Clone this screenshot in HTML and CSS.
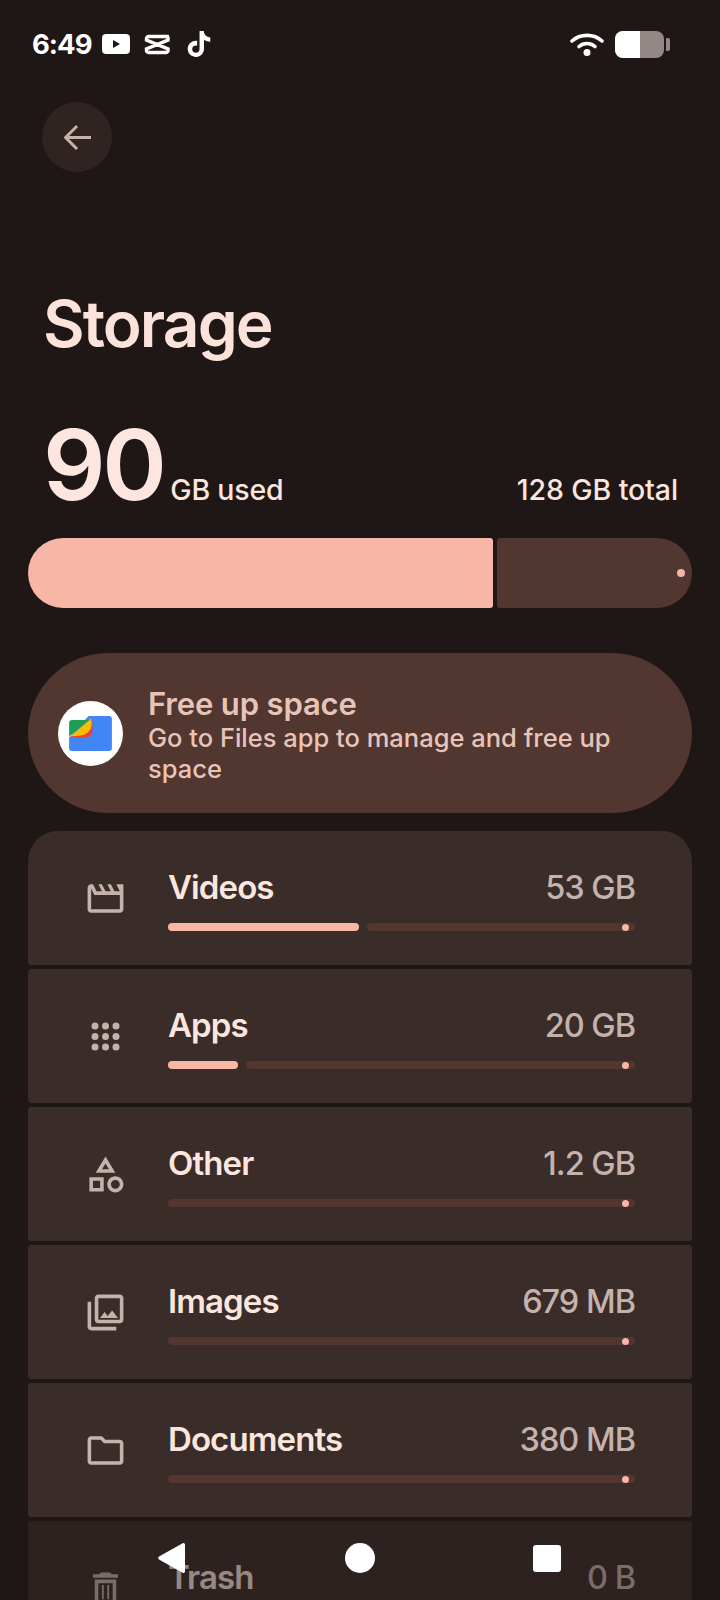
FILE: index.html
```html
<!DOCTYPE html>
<html lang="en">
<head>
<meta charset="utf-8">
<title>Storage</title>
<link rel="stylesheet" href="styles.css">
</head>
<body>
<div class="screen">
  <div class="status">
    <span class="clock">6:49</span>
    <svg class="st-yt" viewBox="0 0 28 20"><path fill="#fff" fill-rule="evenodd" d="M4 0h20a4 4 0 0 1 4 4v12a4 4 0 0 1-4 4H4a4 4 0 0 1-4-4V4a4 4 0 0 1 4-4zM11 6v8l7-4z"/></svg>
    <svg class="st-cc" viewBox="0 0 26 21"><path fill="none" stroke="#fff" stroke-width="3.4" d="M25 2.5H4.5a2 2 0 0 0-2 2v1.5L24 15v1a2 2 0 0 1-2 2.5H4.500a2 2 0 0 1-2-2V15L24 6V2.500"/></svg>
    <svg class="st-tt" viewBox="0 0 24 24"><path fill="#fff" d="M12.525.02c1.31-.02 2.61-.01 3.91-.02.08 1.53.63 3.09 1.75 4.17 1.12 1.11 2.7 1.62 4.24 1.79v4.03c-1.44-.05-2.89-.35-4.2-.97-.57-.26-1.1-.59-1.62-.93-.01 2.92.01 5.84-.02 8.75-.08 1.4-.54 2.79-1.35 3.94-1.31 1.92-3.58 3.17-5.91 3.21-1.43.08-2.86-.31-4.08-1.03-2.02-1.19-3.44-3.37-3.65-5.71-.02-.5-.03-1-.01-1.49.18-1.9 1.12-3.72 2.58-4.96 1.66-1.44 3.98-2.13 6.15-1.72.02 1.48-.04 2.96-.04 4.44-.99-.32-2.15-.23-3.02.37-.63.41-1.11 1.04-1.36 1.75-.21.51-.15 1.07-.14 1.61.24 1.64 1.82 3.02 3.5 2.87 1.12-.01 2.19-.66 2.77-1.61.19-.33.4-.67.41-1.06.1-1.79.06-3.57.07-5.36.01-4.03-.01-8.05.02-12.07z"/></svg>
    <span class="st-space"></span>
    <svg class="st-wifi" viewBox="0 0 34 24"><g fill="none" stroke="#fff" stroke-width="3.6" stroke-linecap="round"><path d="M2 9C10 1.500 24 1.500 32 9"/><path d="M9 14.500C13.500 10.500 20.500 10.500 25 14.500"/></g><circle cx="17" cy="20.500" r="3.500" fill="#fff"/></svg>
    <div class="battery"><div class="battery-fill"></div></div>
    <div class="battery-nub"></div>
  </div>

  <div class="back">
    <svg viewBox="0 0 27 27"><path fill="none" stroke="#c9b0aa" stroke-width="3" stroke-linecap="square" d="M12 3L1.500 13.500 12 24M3 13.500H26"/></svg>
  </div>

  <h1 class="title">Storage</h1>

  <div class="usage">
    <span class="usage-num">90</span>
    <span class="usage-unit">GB used</span>
    <span class="usage-total">128 GB total</span>
  </div>

  <div class="meter">
    <div class="meter-used"></div>
    <div class="meter-free"><span class="meter-dot"></span></div>
  </div>

  <div class="banner">
    <div class="files-logo">
      <svg viewBox="0 0 44 36">
        <path fill="#4285f4" d="M20 0h21a3 3 0 0 1 3 3v30a3 3 0 0 1-3 3H3a3 3 0 0 1-3-3V22z"/>
        <path fill="#ea4335" d="M3 21l16-7 5-9v11q-1 6-6 6H0z"/>
        <path fill="#1e9e55" d="M3 4h18L0 21V7a3 3 0 0 1 3-3z"/>
        <path fill="#fbbc04" d="M22 2q3 8-1 13t-9 5L1 21 21 4z"/>
      </svg>
    </div>
    <div class="banner-text">
      <div class="banner-title">Free up space</div>
      <div class="banner-sub">Go to Files app to manage and free up space</div>
    </div>
  </div>

  <div class="list">
    <div class="row">
      <svg class="row-icon" viewBox="0 0 24 24"><path d="M4 6.470L5.760 10H20v8H4V6.470M22 4h-4l2 4h-3l-2-4h-2l2 4h-3l-2-4H8l2 4H7L5 4H4c-1.100 0-1.990.9-1.990 2L2 18c0 1.100.9 2 2 2h16c1.100 0 2-.9 2-2V4z"/></svg>
      <div class="row-main">
        <div class="row-head"><span class="row-name">Videos</span><span class="row-size">53 GB</span></div>
        <div class="row-bar">
          <span class="row-used row-used-videos"></span>
          <span class="row-track"><span class="row-dot"></span></span>
        </div>
      </div>
    </div>
    <div class="row">
      <svg class="row-icon" viewBox="0 0 43 43"><circle cx="11" cy="11" r="3.500"/><circle cx="21.500" cy="11" r="3.500"/><circle cx="32" cy="11" r="3.500"/><circle cx="11" cy="21.500" r="3.500"/><circle cx="21.500" cy="21.500" r="3.500"/><circle cx="32" cy="21.500" r="3.500"/><circle cx="11" cy="32" r="3.500"/><circle cx="21.500" cy="32" r="3.500"/><circle cx="32" cy="32" r="3.500"/></svg>
      <div class="row-main">
        <div class="row-head"><span class="row-name">Apps</span><span class="row-size">20 GB</span></div>
        <div class="row-bar">
          <span class="row-used row-used-apps"></span>
          <span class="row-track"><span class="row-dot"></span></span>
        </div>
      </div>
    </div>
    <div class="row">
      <svg class="row-icon" viewBox="0 0 24 24"><path d="M12 2l-5.500 9h11L12 2zm0 3.840L13.930 9h-3.870L12 5.840zM17.500 13c-2.490 0-4.500 2.010-4.500 4.500s2.010 4.500 4.500 4.500 4.500-2.010 4.500-4.500-2.010-4.500-4.500-4.500zm0 7c-1.380 0-2.500-1.120-2.500-2.500s1.120-2.500 2.500-2.500 2.500 1.120 2.500 2.500-1.120 2.500-2.500 2.500zM3 21.500h8v-8H3v8zm2-6h4v4H5v-4z"/></svg>
      <div class="row-main">
        <div class="row-head"><span class="row-name">Other</span><span class="row-size">1.2 GB</span></div>
        <div class="row-bar"><span class="row-track"><span class="row-dot"></span></span></div>
      </div>
    </div>
    <div class="row">
      <svg class="row-icon" viewBox="0 0 24 24"><path d="M20 4v12H8V4h12m0-2H8c-1.100 0-2 .9-2 2v12c0 1.100.9 2 2 2h12c1.100 0 2-.9 2-2V4c0-1.100-.9-2-2-2zm-8.500 9.670l1.690 2.260 2.480-3.100L19 15H9zM2 6v14c0 1.100.9 2 2 2h14v-2H4V6H2z"/></svg>
      <div class="row-main">
        <div class="row-head"><span class="row-name">Images</span><span class="row-size">679 MB</span></div>
        <div class="row-bar"><span class="row-track"><span class="row-dot"></span></span></div>
      </div>
    </div>
    <div class="row">
      <svg class="row-icon" viewBox="0 0 24 24"><path d="M9.170 6l2 2H20v10H4V6h5.170M10 4H4c-1.100 0-1.990.9-1.990 2L2 18c0 1.100.9 2 2 2h16c1.100 0 2-.9 2-2V8c0-1.100-.9-2-2-2h-8l-2-2z"/></svg>
      <div class="row-main">
        <div class="row-head"><span class="row-name">Documents</span><span class="row-size">380 MB</span></div>
        <div class="row-bar"><span class="row-track"><span class="row-dot"></span></span></div>
      </div>
    </div>
    <div class="row">
      <svg class="row-icon" viewBox="0 0 24 24"><path d="M16 9v10H8V9h8m-1.500-6h-5l-1 1H5v2h14V4h-3.500l-1-1zM18 7H6v12c0 1.100.9 2 2 2h8c1.100 0 2-.9 2-2V7zM10 10h1v8h-1zM13 10h1v8h-1z"/></svg>
      <div class="row-main">
        <div class="row-head"><span class="row-name">Trash</span><span class="row-size">0 B</span></div>
      </div>
    </div>
  </div>

  <div class="navbar">
    <svg class="nav-back" viewBox="0 0 28 30"><path fill="#fff" d="M27 1.500V28.500a1.500 1.500 0 0 1-2.300 1.200L1 16.500a1.800 1.800 0 0 1 0-3L24.700.3A1.500 1.500 0 0 1 27 1.500z"/></svg>
    <span class="nav-home"></span>
    <span class="nav-recent"></span>
  </div>
</div>
</body>
</html>
```
FILE: styles.css
```css
* { box-sizing: border-box; }
html, body { margin: 0; padding: 0; background: #1f1616; }
.screen {
  position: relative;
  width: 720px;
  height: 1600px;
  overflow: hidden;
  background: #1f1616;
  font-family: Inter, "Open Sans", sans-serif;
  color: #fbe6df;
}

/* status bar */
.status { display: flex; align-items: center; height: 88px; padding: 0 50px 0 32px; }
.clock { flex: none; width: 70px; font-size: 27.500px; font-weight: 700; color: #fff; letter-spacing: -1px; }
.st-yt { width: 28px; height: 20px; }
.st-cc { width: 26px; height: 21px; margin-left: 14px; }
.st-tt { width: 26px; height: 28px; margin-left: 16px; }
.st-space { flex: 1; }
.st-wifi { width: 34px; height: 24px; }
.battery { width: 49px; height: 27px; margin-left: 11px; border-radius: 8px; background: #938886; overflow: hidden; }
.battery-fill { width: 25px; height: 100%; background: #fff; }
.battery-nub { width: 4px; height: 13px; margin-left: 2px; border-radius: 0 2px 2px 0; background: #938886; }

/* back button */
.back { display: flex; align-items: center; justify-content: center; width: 70px; height: 70px; margin: 14px 0 0 42px; border-radius: 50%; background: #2f2422; }
.back svg { width: 27px; height: 27px; }

/* heading */
.title { margin: 112px 0 0 43px; font-size: 64px; font-weight: 600; line-height: 80px; letter-spacing: -1.900px; color: #fbe2da; }

.usage { display: flex; align-items: baseline; margin: 46px 0 0; padding: 0 42px 0 43px; height: 110px; }
.usage-num { font-size: 98px; font-weight: 600; line-height: 110px; letter-spacing: -3.500px; color: #fde6e0; }
.usage-unit { margin-left: 7px; font-size: 28.500px; font-weight: 500; letter-spacing: -0.200px; }
.usage-total { margin-left: auto; font-size: 28.500px; font-weight: 500; letter-spacing: -0.100px; }

.meter { display: flex; gap: 4px; height: 70px; margin: 18px 28px 0; }
.meter-used { width: 465px; border-radius: 35px 3px 3px 35px; background: #f8b7a6; }
.meter-free { position: relative; flex: 1; border-radius: 3px 35px 35px 3px; background: #523630; }
.meter-dot { position: absolute; top: 31px; right: 7px; width: 8px; height: 8px; border-radius: 50%; background: #f8b7a6; }

/* banner */
.banner { display: flex; align-items: center; height: 160px; margin: 45px 28px 0; padding: 0 30px; border-radius: 80px; background: #523630; }
.files-logo { display: flex; align-items: center; justify-content: center; flex: none; width: 65px; height: 65px; border-radius: 50%; background: #fff; }
.files-logo svg { width: 43px; height: 35px; }
.banner-text { margin-left: 25px; padding-top: 2px; }
.banner-title { font-size: 31px; font-weight: 600; line-height: 39px; letter-spacing: -0.150px; color: #e8c4b8; }
.banner-sub { font-size: 25.500px; font-weight: 500; line-height: 30.500px; color: #e8c4b8; }

/* list */
.list { display: flex; flex-direction: column; gap: 4px; margin: 18px 28px 0; }
.row { display: flex; align-items: center; flex: none; height: 134px; padding: 0 57px 0 56px; border-radius: 3px; background: #392c29; }
.row:first-child { border-radius: 30px 30px 3px 3px; }
.row-icon { flex: none; width: 43px; height: 43px; fill: #c5b2ad; }
.row-main { flex: 1; margin-left: 41px; align-self: flex-start; padding-top: 36px; }
.row-head { display: flex; justify-content: space-between; align-items: baseline; height: 40px; }
.row-name { font-size: 33px; font-weight: 600; line-height: 40px; letter-spacing: -0.900px; color: #fbe6df; }
.row-size { font-size: 32.500px; font-weight: 500; line-height: 40px; letter-spacing: -1px; color: #c5b2ad; }
.row-bar { display: flex; gap: 8px; height: 8px; margin-top: 16px; }
.row-used { height: 8px; border-radius: 4px; background: #f8b7a6; }
.row-used-videos { width: 191px; }
.row-used-apps { width: 70px; }
.row-track { position: relative; flex: 1; height: 8px; border-radius: 4px; background: #523630; }
.row-dot { position: absolute; top: 0.5px; right: 6px; width: 7px; height: 7px; border-radius: 50%; background: #f8b7a6; }

/* nav bar over the list */
.navbar { position: absolute; left: 0; right: 0; bottom: 0; height: 82px; background: rgba(31, 22, 22, 0.45); }
.nav-back { position: absolute; left: 158px; top: 25px; width: 28px; height: 30px; }
.nav-home { position: absolute; left: 345px; top: 25px; width: 30px; height: 30px; border-radius: 50%; background: #fff; }
.nav-recent { position: absolute; left: 533px; top: 27px; width: 28px; height: 27px; border-radius: 3px; background: #fff; }
```
